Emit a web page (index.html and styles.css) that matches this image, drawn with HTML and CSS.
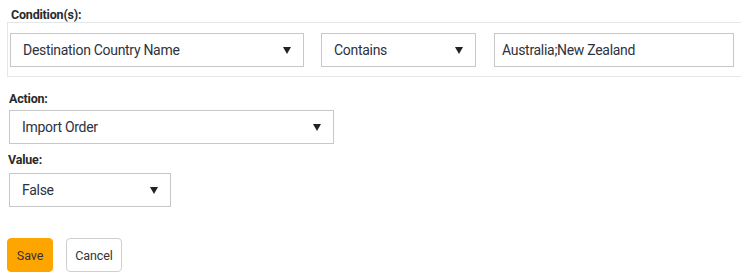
FILE: index.html
```html
<!DOCTYPE html>
<html lang="en">
  <head>
    <meta charset="UTF-8" />
    <title>Rule</title>
    <link rel="stylesheet" href="styles.css">
  </head>
  <body>
    <main class="rule">
      <label class="field-label cond-label">Condition(s):</label>
      <section class="conditions">
        <div class="select field-wide">
          <span>Destination Country Name</span>
          <i class="caret"></i>
        </div>
        <div class="select field-op">
          <span>Contains</span>
          <i class="caret"></i>
        </div>
        <div class="text-input">Australia;New Zealand</div>
      </section>

      <label class="field-label action-label">Action:</label>
      <div class="select field-action">
        <span>Import Order</span>
        <i class="caret"></i>
      </div>

      <label class="field-label value-label">Value:</label>
      <div class="select field-value">
        <span>False</span>
        <i class="caret"></i>
      </div>

      <div class="buttons">
        <button class="btn btn-save">Save</button>
        <button class="btn btn-cancel">Cancel</button>
      </div>
    </main>
  </body>
</html>
```
FILE: styles.css
```css
body {
  margin: 0;
  font-family: Roboto, "DejaVu Sans", sans-serif;
  color: #333;
  background: #fff;
  overflow: hidden;
}
.rule {
  display: flex;
  flex-direction: column;
  align-items: flex-start;
  padding-top: 8px;
}
.field-label {
  display: block;
  font-size: 12.5px;
  font-weight: bold;
  letter-spacing: -0.2px;
  line-height: 14px;
  color: #2a2a2a;
}
.cond-label {
  margin-left: 11px;
}
.conditions {
  display: flex;
  align-self: stretch;
  margin: 0 -10px 0 7px;
  padding: 10px 0 9px 2px;
  border: 1px solid #e6e6e6;
  gap: 17px;
}
.conditions .text-input {
  margin-left: 1px;
}
.select,
.text-input {
  box-sizing: border-box;
  height: 34px;
  border: 1px solid #c8c8c8;
  background: #fff;
  display: flex;
  align-items: center;
  justify-content: space-between;
  font-size: 14px;
  letter-spacing: -0.3px;
  color: #2e3240;
  padding: 0 12px 0 12px;
}
.caret {
  width: 0;
  height: 0;
  border-left: 4px solid transparent;
  border-right: 4px solid transparent;
  border-top: 7px solid #222;
}
.field-wide {
  width: 294px;
}
.field-op {
  width: 155px;
}
.text-input {
  width: 240px;
  padding-left: 7px;
  justify-content: flex-start;
}
.action-label {
  margin: 15px 0 0 9px;
}
.field-action {
  margin: 4px 0 0 9px;
  width: 325px;
}
.value-label {
  margin: 9px 0 0 8px;
}
.field-value {
  margin: 6px 0 0 9px;
  width: 162px;
}
.buttons {
  display: flex;
  gap: 13px;
  margin: 31px 0 0 7px;
}
.btn {
  box-sizing: border-box;
  height: 34px;
  border-radius: 4px;
  font-family: Roboto, "DejaVu Sans", sans-serif;
  font-size: 12.5px;
  letter-spacing: -0.1px;
  color: #333;
}
.btn-save {
  width: 46px;
  background: #ffa500;
  border: 1px solid #ffa500;
}
.btn-cancel {
  width: 56px;
  background: #fff;
  border: 1px solid #cfcfcf;
}
```
